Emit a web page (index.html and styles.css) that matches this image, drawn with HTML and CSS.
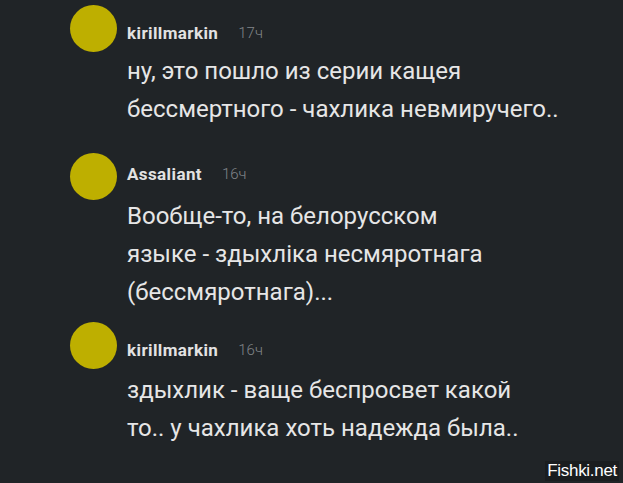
FILE: index.html
```html
<!DOCTYPE html>
<html lang="ru">
<head>
<meta charset="utf-8">
<link rel="stylesheet" href="styles.css">
</head>
<body>
<div class="feed">
  <div class="comment c1">
    <div class="head">
      <div class="avatar"></div>
      <span class="name">kirillmarkin</span>
      <span class="time">17ч</span>
    </div>
    <div class="text">ну, это пошло из серии кащея<br>бессмертного - чахлика невмиручего..</div>
  </div>
  <div class="comment c2">
    <div class="head">
      <div class="avatar"></div>
      <span class="name">Assaliant</span>
      <span class="time">16ч</span>
    </div>
    <div class="text">Вообще-то, на белорусском<br>языке - здыхліка несмяротнага<br>(бессмяротнага)...</div>
  </div>
  <div class="comment c3">
    <div class="head">
      <div class="avatar"></div>
      <span class="name">kirillmarkin</span>
      <span class="time">16ч</span>
    </div>
    <div class="text">здыхлик - ваще беспросвет какой<br>то.. у чахлика хоть надежда была..</div>
  </div>
</div>
<div class="watermark">Fishki.net</div>
</body>
</html>
```
FILE: styles.css
```css
html, body {
  margin: 0;
  padding: 0;
  background: #202427;
  width: 623px;
  height: 483px;
  overflow: hidden;
}
body {
  font-family: Roboto, "Noto Sans", sans-serif;
  color: #e4e4e4;
  position: relative;
}
.feed {
  display: flex;
  flex-direction: column;
  padding: 5px 0 0 70px;
}
.comment {
  display: flex;
  flex-direction: column;
}
.c2 { margin-top: 25px; }
.c3 { margin-top: 11px; }
.head {
  display: flex;
  align-items: center;
  height: 47px;
}
.avatar {
  width: 47px;
  height: 47px;
  border-radius: 50%;
  background: #beaf00;
  flex: none;
}
.name {
  margin-left: 10px;
  font-weight: 700;
  font-size: 17px;
  letter-spacing: 0.4px;
  color: #e2e2e2;
  position: relative;
  top: 4px;
}
.c2 .name { top: -3px; }
.time {
  margin-left: 20px;
  font-weight: 300;
  font-size: 15px;
  color: #82868a;
  position: relative;
  top: 4px;
}
.c2 .time { top: -3px; }
.text {
  margin: 0 0 0 57px;
  font-size: 24px;
  line-height: 38px;
  color: #e6e6e6;
}
.c2 .text { margin-top: -3px; }
.c3 .text { margin-top: 2px; }
.watermark {
  position: absolute;
  right: 4px;
  bottom: 2px;
  font-family: "Liberation Sans", Arial, sans-serif;
  font-size: 17px;
  letter-spacing: -0.3px;
  color: #ffffff;
  background: #1a1d1f;
  padding: 0 2px;
}
```
